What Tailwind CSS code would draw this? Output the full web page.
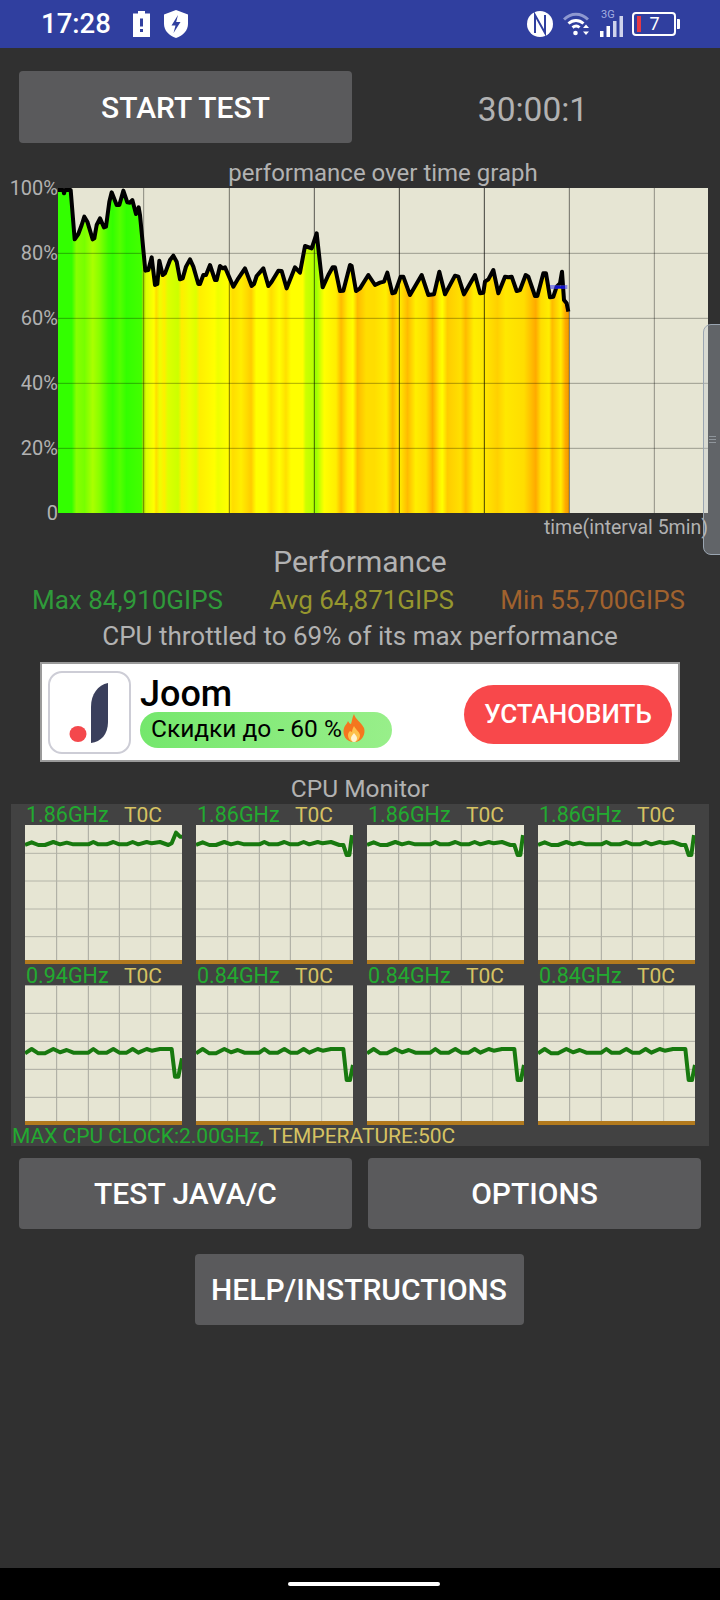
<!DOCTYPE html>
<html lang="ru">
<head>
<meta charset="utf-8">
<title>CPU Throttling Test</title>
<script src="https://cdn.jsdelivr.net/npm/@tailwindcss/browser@4"></script>
</head>
<body class="m-0 bg-[#303030] font-[Roboto,sans-serif]">
<svg class="absolute w-0 h-0" aria-hidden="true">
  <defs>
    <g id="cell-grid" fill="none" stroke-width="3">
      <path stroke="#a8a89e" d="M170 0V600M265 0V600M358 0V600"/>
      <path stroke="#c0c0b4" d="M452 0V600"/>
      <path stroke="#b4b4a8" d="M0 220H600M0 303H600M0 387H600M0 470H600"/>
    </g>
    <g id="cell-grid2" fill="none" stroke-width="3">
      <path stroke="#a8a89e" d="M170 0V600M265 0V600M358 0V600"/>
      <path stroke="#c0c0b4" d="M452 0V600"/>
      <path stroke="#aaaaa0" d="M0 76.500H600M0 160H600M0 244H600M0 328H600M0 412H600"/>
    </g>
  </defs>
</svg>

<div class="relative flex flex-col w-[720px] h-[1600px] overflow-hidden text-[#b2b2b2]">
  <!-- status bar -->
  <div class="flex items-center h-[48px] bg-[#303f9f] text-white shrink-0">
    <span class="ml-[41px] w-[69px] text-[27.500px] leading-[48px] font-medium whitespace-nowrap">17:28</span>
    <svg class="ml-[23px]" width="17" height="26" viewBox="0 0 17 26"><path fill="#fff" d="M5 0h7v2.500h5V26H0V2.500h5z"/><rect x="7" y="7.500" width="3" height="8" fill="#303f9f"/><rect x="7" y="18" width="3" height="3" fill="#303f9f"/></svg>
    <svg class="ml-[14px]" width="24" height="28" viewBox="0 0 24 28"><path fill="#fff" d="M12 0l12 4.500v9.500c0 6.500-5 11.500-12 14C5 25.500 0 20.500 0 14V4.500z"/><path fill="#303f9f" d="M14 5l-6.500 10.500h4L9.500 23l7-11h-4.300z"/></svg>
    <svg class="ml-[339px]" width="26" height="26" viewBox="0 0 26 26"><circle cx="13" cy="13" r="13" fill="#fff"/><path fill="none" stroke="#303f9f" stroke-width="2" d="M8 22V4l10 18V4"/></svg>
    <svg class="ml-[10px]" width="26" height="24" viewBox="0 0 26 24"><path fill="none" stroke="#8e98d0" stroke-width="3" d="M1 7.500C8 0.500 18 0.500 25 7.500"/><path fill="none" stroke="#fff" stroke-width="3" d="M5.500 11.500c4.500-4 10.500-4 15 0M9.500 15.500c2.500-2 5-2 7 0"/><circle cx="12.500" cy="21" r="2.300" fill="#fff"/><path fill="#fff" d="M23 12.500l3 3.500h-6zM23 23l3-3.500h-6z"/></svg>
    <div class="relative ml-[11px] w-[23px] h-[24px]">
      <span class="absolute -top-[3px] left-[1px] text-[11px] leading-[11px] text-[#a4aee0]">3G</span>
      <svg class="absolute left-0 top-[4px]" width="23" height="21" viewBox="0 0 23 21"><path fill="#fff" d="M0 15h3.500v6H0zM6.500 10H10v11H6.500z"/><path fill="#cfd3ec" d="M13 5h3.500v16H13zM19.500 0H23v21h-3.500z"/></svg>
    </div>
    <div class="relative ml-[9px] flex items-center justify-center w-[44px] h-[24px] rounded-[4px] border-2 border-white text-[18px] leading-none">
      <span class="absolute left-[3px] top-[2px] w-[3.500px] h-[16px] bg-[#e53945]"></span>
      <span class="ml-[1px]">7</span>
      <span class="absolute -right-[6px] top-[5px] w-[3.500px] h-[10px] bg-white rounded-r-[1px]"></span>
    </div>
  </div>

  <!-- start row -->
  <div class="flex items-center mt-[23px] h-[72px] pl-[19px] shrink-0">
    <button class="w-[333px] h-[72px] rounded-[4px] bg-[#5a5a5c] text-white text-[30px] font-medium">START TEST</button>
    <div class="w-[362px] text-center text-[33.500px] leading-[72px] pt-[6px]">30:00:1</div>
  </div>

  <div class="mt-[17px] h-[26px] pl-[46px] text-center text-[24px] leading-[26px] shrink-0">performance over time graph</div>

  <!-- chart -->
  <div class="flex mt-[2px] h-[325px] shrink-0">
    <div class="flex flex-col justify-between w-[58px] h-[349px] -mt-[12px] text-right text-[20px] leading-[24px]">
      <span>100%</span><span>80%</span><span>60%</span><span>40%</span><span>20%</span><span>0</span>
    </div>
    <svg class="block" width="650" height="325" viewBox="174 84 1950 975">
      <defs>
        <linearGradient id="heat" gradientUnits="userSpaceOnUse" x1="174" y1="0" x2="1707" y2="0">
          <stop offset="0" stop-color="#33ff00"/><stop offset=".027" stop-color="#33ff00"/><stop offset=".036" stop-color="#88ff00"/><stop offset=".052" stop-color="#77ff00"/><stop offset=".068" stop-color="#aaff00"/><stop offset=".081" stop-color="#88ff00"/><stop offset=".098" stop-color="#44ff00"/><stop offset=".107" stop-color="#33ff00"/><stop offset=".121" stop-color="#55ff00"/><stop offset=".134" stop-color="#33ff00"/><stop offset=".163" stop-color="#44ff00"/><stop offset=".167" stop-color="#aadd00"/><stop offset=".173" stop-color="#ddff00"/><stop offset=".188" stop-color="#ffff00"/><stop offset=".192" stop-color="#ffdd00"/><stop offset=".199" stop-color="#eeff00"/><stop offset=".208" stop-color="#ffee00"/><stop offset=".215" stop-color="#ddff00"/><stop offset=".235" stop-color="#ccff00"/><stop offset=".242" stop-color="#ffee00"/><stop offset=".257" stop-color="#eeff00"/><stop offset=".270" stop-color="#ddff00"/><stop offset=".277" stop-color="#ffee00"/><stop offset=".306" stop-color="#ffff00"/><stop offset=".313" stop-color="#eeff00"/><stop offset=".332" stop-color="#ffff00"/><stop offset=".342" stop-color="#ffdd00"/><stop offset=".358" stop-color="#ffee00"/><stop offset=".378" stop-color="#ffcc00"/><stop offset=".388" stop-color="#ffff00"/><stop offset=".407" stop-color="#ffff00"/><stop offset=".417" stop-color="#ffdd00"/><stop offset=".433" stop-color="#ffff00"/><stop offset=".446" stop-color="#ffe000"/><stop offset=".456" stop-color="#ffff00"/><stop offset=".479" stop-color="#ffff00"/><stop offset=".485" stop-color="#ccff00"/><stop offset=".498" stop-color="#bbff00"/><stop offset=".505" stop-color="#99ff00"/><stop offset=".515" stop-color="#ddff00"/><stop offset=".521" stop-color="#ffff00"/><stop offset=".544" stop-color="#ffee00"/><stop offset=".554" stop-color="#ffbb00"/><stop offset=".567" stop-color="#ffee00"/><stop offset=".577" stop-color="#ffff00"/><stop offset=".586" stop-color="#ffbb00"/><stop offset=".603" stop-color="#ffdd00"/><stop offset=".619" stop-color="#ffdd00"/><stop offset=".642" stop-color="#ffee00"/><stop offset=".655" stop-color="#ffbb00"/><stop offset=".668" stop-color="#ffee00"/><stop offset=".684" stop-color="#ffbb00"/><stop offset=".700" stop-color="#ffee00"/><stop offset=".720" stop-color="#ffe000"/><stop offset=".733" stop-color="#ffaa00"/><stop offset=".746" stop-color="#ffee00"/><stop offset=".752" stop-color="#ffff00"/><stop offset=".762" stop-color="#ffcc00"/><stop offset=".788" stop-color="#ffe000"/><stop offset=".798" stop-color="#ffbb00"/><stop offset=".814" stop-color="#ffee00"/><stop offset=".834" stop-color="#ffe800"/><stop offset=".860" stop-color="#ffd000"/><stop offset=".876" stop-color="#ffe800"/><stop offset=".912" stop-color="#ffdd00"/><stop offset=".935" stop-color="#ffaa00"/><stop offset=".945" stop-color="#ffdd00"/><stop offset=".961" stop-color="#ffee00"/><stop offset=".967" stop-color="#ffbb00"/><stop offset=".984" stop-color="#ffee00"/><stop offset=".993" stop-color="#ffaa00"/><stop offset="1" stop-color="#ee9900"/>
        </linearGradient>
      </defs>
      <rect x="174" y="84" width="1950" height="975" fill="#e6e5d3"/>
      <polygon fill="url(#heat)" points="174,1059 174,90 190,90 192,100 195,90 212,90 224,238 235,222 245,195 253,170 262,185 278,238 283,235 290,195 300,175 312,202 318,200 328,125 335,97 350,135 358,135 370,92 382,127 390,128 397,120 408,162 416,142 420,165 436,332 445,330 455,292 465,375 472,372 478,302 488,345 495,340 510,300 520,287 530,305 540,358 548,355 558,320 570,298 580,320 595,372 600,372 610,345 618,345 630,315 645,360 650,360 660,318 668,325 675,322 700,380 715,355 735,325 755,378 762,372 770,348 790,325 805,378 815,365 835,332 845,333 860,385 885,322 900,338 915,258 935,265 950,220 968,382 985,345 998,322 1005,322 1020,393 1030,392 1050,315 1055,318 1068,393 1080,385 1105,345 1125,375 1140,368 1152,365 1162,338 1177,400 1185,398 1202,350 1210,350 1230,405 1265,345 1285,405 1302,403 1318,335 1335,403 1365,347 1375,350 1392,403 1425,345 1440,400 1450,398 1455,365 1465,358 1480,330 1495,400 1515,350 1525,352 1535,350 1550,393 1560,390 1577,345 1585,350 1605,408 1612,408 1630,340 1638,340 1650,412 1660,410 1670,380 1680,370 1686,335 1692,420 1700,430 1707,455 1707,1059"/>
      <g fill="none" stroke-width="3">
        <path stroke="#000" stroke-opacity=".32" d="M174 280H2124M174 475H2124M174 670H2124M174 865H2124"/>
        <path stroke="#000" stroke-opacity=".4" d="M431 84V1059"/>
        <path stroke="#000" stroke-opacity=".5" d="M688 84V1059"/>
        <path stroke="#000" stroke-opacity=".62" d="M943 84V1059"/>
        <path stroke="#000" stroke-opacity=".72" d="M1198 84V1059M1453 84V1059"/>
        <path stroke="#000" stroke-opacity=".52" d="M1708 84V1059"/>
        <path stroke="#000" stroke-opacity=".38" d="M1963 84V1059"/>
      </g>
      <polyline fill="none" stroke="#000" stroke-width="12" stroke-linejoin="round" points="174,90 190,90 192,100 195,90 212,90 224,238 235,222 245,195 253,170 262,185 278,238 283,235 290,195 300,175 312,202 318,200 328,125 335,97 350,135 358,135 370,92 382,127 390,128 397,120 408,162 416,142 420,165 436,332 445,330 455,292 465,375 472,372 478,302 488,345 495,340 510,300 520,287 530,305 540,358 548,355 558,320 570,298 580,320 595,372 600,372 610,345 618,345 630,315 645,360 650,360 660,318 668,325 675,322 700,380 715,355 735,325 755,378 762,372 770,348 790,325 805,378 815,365 835,332 845,333 860,385 885,322 900,338 915,258 935,265 950,220 968,382 985,345 998,322 1005,322 1020,393 1030,392 1050,315 1055,318 1068,393 1080,385 1105,345 1125,375 1140,368 1152,365 1162,338 1177,400 1185,398 1202,350 1210,350 1230,405 1265,345 1285,405 1302,403 1318,335 1335,403 1365,347 1375,350 1392,403 1425,345 1440,400 1450,398 1455,365 1465,358 1480,330 1495,400 1515,350 1525,352 1535,350 1550,393 1560,390 1577,345 1585,350 1605,408 1612,408 1630,340 1638,340 1650,412 1660,410 1670,380 1680,370 1686,335 1692,420 1700,430 1705,455"/>
      <path d="M1650 381H1702" stroke="#4040ee" stroke-opacity=".55" stroke-width="12" fill="none"/>
      <path d="M1665 382H1695" stroke="#1010cc" stroke-width="7" fill="none"/>
    </svg>
  </div>

  <div class="mt-[2px] h-[26px] pr-[12px] text-right text-[19.500px] leading-[26px] shrink-0">time(interval 5min)</div>
  <div class="mt-[4px] h-[34px] text-center text-[30px] leading-[34px] shrink-0">Performance</div>
  <div class="flex justify-between mt-[6px] h-[30px] pl-[32px] pr-[35px] text-[26px] leading-[30px] shrink-0">
    <span class="text-[#2f9a3a]">Max 84,910GIPS</span>
    <span class="text-[#96962e]">Avg 64,871GIPS</span>
    <span class="text-[#a0622e]">Min 55,700GIPS</span>
  </div>
  <div class="mt-[5px] h-[30px] text-center text-[26px] leading-[32px] whitespace-nowrap shrink-0">CPU throttled to 69% of its max performance</div>

  <!-- ad -->
  <div class="flex items-center mt-[12px] ml-[40px] w-[640px] h-[100px] border-2 border-[#9a9a9a] bg-white shrink-0">
    <div class="ml-[6px] w-[83px] h-[83px] rounded-[14px] border-2 border-[#cdcdd6] bg-white shrink-0">
      <svg width="79" height="79" viewBox="0 0 79 79"><path fill="#3a3f5c" d="M58 10V49c0 12-7 20-17 21V34c0-13 7-22 17-24z"/><ellipse cx="28" cy="61" rx="8.500" ry="8" fill="#f4484c"/></svg>
    </div>
    <div class="ml-[9px] flex flex-col w-[252px] shrink-0">
      <div class="h-[44px] text-[36px] leading-[44px] font-medium text-black">Joom</div>
      <div class="flex items-center h-[36px] -mt-[4px] mb-[5px] pl-[11px] rounded-full bg-gradient-to-r from-[#74e76c] to-[#98ef8a] text-[24.500px] text-black whitespace-nowrap">
        <span>Скидки до - 60 %</span>
        <svg class="-mt-[3px]" width="24" height="28" viewBox="0 0 24 28"><path fill="#f5761e" d="M12 0c1 5 7 8 10 14 2 6-2 14-10 14S0 21 2 14c1-3 3-4 4-7 1 2 2 3 3 3 1-3 1-6 3-10z"/><path fill="#fdc04a" d="M12 12c1 3 5 5 6 9 0 4-3 7-6 7s-6-3-6-7c0-2 1-3 2-4l2 1c0-2 1-4 2-6z"/><path fill="#fff3d0" d="M12 19c1 2 3 3 3 5s-1 4-3 4-3-2-3-4 2-3 3-5z"/></svg>
      </div>
    </div>
    <button class="ml-[72px] mt-[4px] w-[208px] h-[59px] rounded-full bg-[#f8484b] text-white text-[26px] font-medium shrink-0">УСТАНОВИТЬ</button>
  </div>

  <div class="mt-[13px] h-[26px] text-center text-[24.500px] leading-[28px] shrink-0">CPU Monitor</div>

  <!-- cpu monitor -->
  <div class="flex flex-col mt-[3px] ml-[11px] w-[698px] h-[342px] bg-[#424242] shrink-0">
    <div class="flex gap-[14px] pl-[14px]">
      <div class="flex flex-col w-[157px]">
        <div class="flex h-[21px] pl-[1px] text-[21.500px] leading-[22px]"><span class="w-[98px] text-[#22aa30]">1.86GHz</span><span class="text-[21px] text-[#d6c262]">T0C</span></div>
        <svg class="block" width="157" height="135" viewBox="75 135 471 405"><rect x="75" y="135" width="471" height="405" fill="#e6e5d3"/><use href="#cell-grid"/><polyline fill="none" stroke="#18790f" stroke-width="12" stroke-linejoin="round" points="75,195 95,187 115,195 135,195 160,186 180,193 200,188 220,193 265,193 280,186 295,193 320,193 340,186 358,193 380,193 398,186 415,193 440,186 455,190 480,186 505,195 515,190 528,158 540,170 546,170"/></svg>
        <div class="h-[4px] bg-[#b27a1e]"></div>
      </div>
      <div class="flex flex-col w-[157px]">
        <div class="flex h-[21px] pl-[1px] text-[21.500px] leading-[22px]"><span class="w-[98px] text-[#22aa30]">1.86GHz</span><span class="text-[21px] text-[#d6c262]">T0C</span></div>
        <svg class="block" width="157" height="135" viewBox="75 135 471 405"><rect x="75" y="135" width="471" height="405" fill="#e6e5d3"/><use href="#cell-grid"/><polyline fill="none" stroke="#18790f" stroke-width="12" stroke-linejoin="round" points="75,195 95,187 115,195 135,195 160,186 180,193 200,188 220,193 265,193 280,186 295,193 320,193 340,186 358,193 380,193 398,186 415,193 440,186 455,190 480,186 505,195 517,195 527,225 535,225 543,165"/></svg>
        <div class="h-[4px] bg-[#b27a1e]"></div>
      </div>
      <div class="flex flex-col w-[157px]">
        <div class="flex h-[21px] pl-[1px] text-[21.500px] leading-[22px]"><span class="w-[98px] text-[#22aa30]">1.86GHz</span><span class="text-[21px] text-[#d6c262]">T0C</span></div>
        <svg class="block" width="157" height="135" viewBox="75 135 471 405"><rect x="75" y="135" width="471" height="405" fill="#e6e5d3"/><use href="#cell-grid"/><polyline fill="none" stroke="#18790f" stroke-width="12" stroke-linejoin="round" points="75,195 95,187 115,195 135,195 160,186 180,193 200,188 220,193 265,193 280,186 295,193 320,193 340,186 358,193 380,193 398,186 415,193 440,186 455,190 480,186 505,195 517,195 527,225 535,225 543,165"/></svg>
        <div class="h-[4px] bg-[#b27a1e]"></div>
      </div>
      <div class="flex flex-col w-[157px]">
        <div class="flex h-[21px] pl-[1px] text-[21.500px] leading-[22px]"><span class="w-[98px] text-[#22aa30]">1.86GHz</span><span class="text-[21px] text-[#d6c262]">T0C</span></div>
        <svg class="block" width="157" height="135" viewBox="75 135 471 405"><rect x="75" y="135" width="471" height="405" fill="#e6e5d3"/><use href="#cell-grid"/><polyline fill="none" stroke="#18790f" stroke-width="12" stroke-linejoin="round" points="75,195 95,187 115,195 135,195 160,186 180,193 200,188 220,193 265,193 280,186 295,193 320,193 340,186 358,193 380,193 398,186 415,193 440,186 455,190 480,186 505,195 517,195 527,225 535,225 543,165"/></svg>
        <div class="h-[4px] bg-[#b27a1e]"></div>
      </div>
    </div>
    <div class="flex gap-[14px] pl-[14px]">
      <div class="flex flex-col w-[157px]">
        <div class="flex h-[21px] pl-[1px] text-[21.500px] leading-[24px]"><span class="w-[98px] text-[#22aa30]">0.94GHz</span><span class="text-[21px] text-[#d6c262]">T0C</span></div>
        <svg class="block" width="157" height="136" viewBox="75 75 471 408"><rect x="75" y="75" width="471" height="408" fill="#e6e5d3"/><use href="#cell-grid2"/><polyline fill="none" stroke="#18790f" stroke-width="12" stroke-linejoin="round" points="75,280 95,267 115,280 135,280 160,267 180,277 200,270 220,278 265,278 280,267 295,278 320,278 340,267 358,278 380,278 398,267 415,278 440,267 455,272 480,267 500,267 515,267 525,350 535,350 546,295"/></svg>
        <div class="h-[4px] bg-[#b27a1e]"></div>
      </div>
      <div class="flex flex-col w-[157px]">
        <div class="flex h-[21px] pl-[1px] text-[21.500px] leading-[24px]"><span class="w-[98px] text-[#22aa30]">0.84GHz</span><span class="text-[21px] text-[#d6c262]">T0C</span></div>
        <svg class="block" width="157" height="136" viewBox="75 75 471 408"><rect x="75" y="75" width="471" height="408" fill="#e6e5d3"/><use href="#cell-grid2"/><polyline fill="none" stroke="#18790f" stroke-width="12" stroke-linejoin="round" points="75,280 95,267 115,280 135,280 160,267 180,277 200,270 220,278 265,278 280,267 295,278 320,278 340,267 358,278 380,278 398,267 415,278 440,267 455,272 480,267 500,267 517,267 527,360 537,360 546,315"/></svg>
        <div class="h-[4px] bg-[#b27a1e]"></div>
      </div>
      <div class="flex flex-col w-[157px]">
        <div class="flex h-[21px] pl-[1px] text-[21.500px] leading-[24px]"><span class="w-[98px] text-[#22aa30]">0.84GHz</span><span class="text-[21px] text-[#d6c262]">T0C</span></div>
        <svg class="block" width="157" height="136" viewBox="75 75 471 408"><rect x="75" y="75" width="471" height="408" fill="#e6e5d3"/><use href="#cell-grid2"/><polyline fill="none" stroke="#18790f" stroke-width="12" stroke-linejoin="round" points="75,280 95,267 115,280 135,280 160,267 180,277 200,270 220,278 265,278 280,267 295,278 320,278 340,267 358,278 380,278 398,267 415,278 440,267 455,272 480,267 500,267 517,267 527,360 537,360 546,315"/></svg>
        <div class="h-[4px] bg-[#b27a1e]"></div>
      </div>
      <div class="flex flex-col w-[157px]">
        <div class="flex h-[21px] pl-[1px] text-[21.500px] leading-[24px]"><span class="w-[98px] text-[#22aa30]">0.84GHz</span><span class="text-[21px] text-[#d6c262]">T0C</span></div>
        <svg class="block" width="157" height="136" viewBox="75 75 471 408"><rect x="75" y="75" width="471" height="408" fill="#e6e5d3"/><use href="#cell-grid2"/><polyline fill="none" stroke="#18790f" stroke-width="12" stroke-linejoin="round" points="75,280 95,267 115,280 135,280 160,267 180,277 200,270 220,278 265,278 280,267 295,278 320,278 340,267 358,278 380,278 398,267 415,278 440,267 455,272 480,267 500,267 517,267 527,360 537,360 546,315"/></svg>
        <div class="h-[4px] bg-[#b27a1e]"></div>
      </div>
    </div>
    <div class="h-[21px] pl-[1px] text-[21px] leading-[22px] whitespace-nowrap"><span class="text-[#22aa30]">MAX CPU CLOCK:2.00GHz, </span><span class="text-[#d6c262]">TEMPERATURE:50C</span></div>
  </div>

  <!-- buttons -->
  <div class="flex gap-[16px] mt-[12px] pl-[19px] shrink-0">
    <button class="w-[333px] h-[71px] rounded-[4px] bg-[#5a5a5c] text-white text-[30px] font-medium">TEST JAVA/C</button>
    <button class="w-[333px] h-[71px] rounded-[4px] bg-[#5a5a5c] text-white text-[30px] font-medium">OPTIONS</button>
  </div>
  <div class="flex justify-center mt-[25px] pr-[2px] shrink-0">
    <button class="w-[329px] h-[71px] rounded-[4px] bg-[#5a5a5c] text-white text-[30px] font-medium">HELP/INSTRUCTIONS</button>
  </div>

  <!-- nav bar -->
  <div class="flex items-end justify-center mt-auto h-[32px] pl-[8px] pb-[14px] bg-black shrink-0">
    <div class="w-[152px] h-[4px] rounded-full bg-white"></div>
  </div>

  <!-- side handle overlay -->
  <div class="absolute left-[703px] top-[324px] flex items-center w-[19px] h-[231px] rounded-l-[8px] border border-[#9aa5b1] bg-[#bcc6d0]/35">
    <div class="flex flex-col gap-[1.500px] ml-[5px] w-[7px]">
      <span class="h-[1.500px] bg-[#8f959b]"></span><span class="h-[1.500px] bg-[#8f959b]"></span><span class="h-[1.500px] bg-[#8f959b]"></span>
    </div>
  </div>
</div>
</body>
</html>
